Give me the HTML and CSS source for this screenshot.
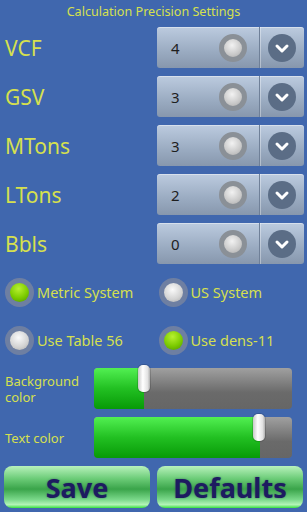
FILE: index.html
```html
<!DOCTYPE html>
<html lang="en">
<head>
  <meta charset="UTF-8">
  <meta name="viewport" content="width=device-width, initial-scale=1.0">
  <title>Calculation Precision Settings</title>
  <link rel="stylesheet" href="styles.css">
</head>
<body>
  <div class="title">Calculation Precision Settings</div>

  <div class="precision-list">
    <div class="prec-row">
      <span class="prec-label">VCF</span>
      <div class="spinner">
        <span class="spin-value">4</span>
        <span class="spin-dot"></span>
        <span class="spin-arrow">
          <svg viewBox="0 0 28 28" width="28" height="28"><circle cx="14" cy="14" r="14" fill="#5b6d86"/><path d="M9 12 L14 17 L19 12" fill="none" stroke="#fff" stroke-width="3" stroke-linecap="round" stroke-linejoin="round"/></svg>
        </span>
      </div>
    </div>
    <div class="prec-row">
      <span class="prec-label">GSV</span>
      <div class="spinner">
        <span class="spin-value">3</span>
        <span class="spin-dot"></span>
        <span class="spin-arrow">
          <svg viewBox="0 0 28 28" width="28" height="28"><circle cx="14" cy="14" r="14" fill="#5b6d86"/><path d="M9 12 L14 17 L19 12" fill="none" stroke="#fff" stroke-width="3" stroke-linecap="round" stroke-linejoin="round"/></svg>
        </span>
      </div>
    </div>
    <div class="prec-row">
      <span class="prec-label">MTons</span>
      <div class="spinner">
        <span class="spin-value">3</span>
        <span class="spin-dot"></span>
        <span class="spin-arrow">
          <svg viewBox="0 0 28 28" width="28" height="28"><circle cx="14" cy="14" r="14" fill="#5b6d86"/><path d="M9 12 L14 17 L19 12" fill="none" stroke="#fff" stroke-width="3" stroke-linecap="round" stroke-linejoin="round"/></svg>
        </span>
      </div>
    </div>
    <div class="prec-row">
      <span class="prec-label">LTons</span>
      <div class="spinner">
        <span class="spin-value">2</span>
        <span class="spin-dot"></span>
        <span class="spin-arrow">
          <svg viewBox="0 0 28 28" width="28" height="28"><circle cx="14" cy="14" r="14" fill="#5b6d86"/><path d="M9 12 L14 17 L19 12" fill="none" stroke="#fff" stroke-width="3" stroke-linecap="round" stroke-linejoin="round"/></svg>
        </span>
      </div>
    </div>
    <div class="prec-row">
      <span class="prec-label">Bbls</span>
      <div class="spinner">
        <span class="spin-value">0</span>
        <span class="spin-dot"></span>
        <span class="spin-arrow">
          <svg viewBox="0 0 28 28" width="28" height="28"><circle cx="14" cy="14" r="14" fill="#5b6d86"/><path d="M9 12 L14 17 L19 12" fill="none" stroke="#fff" stroke-width="3" stroke-linecap="round" stroke-linejoin="round"/></svg>
        </span>
      </div>
    </div>
  </div>

  <div class="radio-row first">
    <label class="radio"><span class="radio-ring"><span class="ball on"></span></span>Metric System</label>
    <label class="radio"><span class="radio-ring"><span class="ball"></span></span>US System</label>
  </div>
  <div class="radio-row">
    <label class="radio"><span class="radio-ring"><span class="ball"></span></span>Use Table 56</label>
    <label class="radio"><span class="radio-ring"><span class="ball on"></span></span>Use dens-11</label>
  </div>

  <div class="slider-row">
    <span class="slider-label">Background color</span>
    <div class="track">
      <div class="fill" style="width: 50px"></div>
      <span class="thumb" style="left: 44px"></span>
    </div>
  </div>
  <div class="slider-row second">
    <span class="slider-label">Text color</span>
    <div class="track">
      <div class="fill" style="width: 166px"></div>
      <span class="thumb" style="left: 159px"></span>
    </div>
  </div>

  <div class="buttons">
    <button class="big-btn">Save</button>
    <button class="big-btn">Defaults</button>
  </div>
</body>
</html>
```

FILE: styles.css
```css
body {
  margin: 0;
  width: 307px;
  height: 512px;
  overflow: hidden;
  background-color: #4067ae;
  font-family: 'Noto Sans', 'Open Sans', sans-serif;
  color: #d6e04e;
}
.title {
  height: 27px;
  line-height: 24px;
  text-align: center;
  font-size: 12.6px;
}
.precision-list {
  display: flex;
  flex-direction: column;
  gap: 8px;
}
.prec-row {
  display: flex;
  align-items: center;
  height: 41px;
}
.prec-label {
  flex: 1;
  padding-left: 5px;
  font-size: 21px;
}
.spinner {
  width: 147px;
  height: 41px;
  margin-right: 3px;
  display: flex;
  align-items: center;
  border-radius: 3px;
  background: linear-gradient(#bccbdf, #9aabc1 60%, #8797ad);
  box-shadow: inset 0 1px 0 rgba(255, 255, 255, 0.4);
}
.spin-value {
  width: 48px;
  padding-left: 14px;
  font-size: 15px;
  color: #1e1e1e;
}
.spin-dot {
  width: 18px;
  height: 18px;
  border-radius: 50%;
  border: 5px solid #8a9097;
  background: radial-gradient(circle at 45% 35%, #f2f2f2, #c9c9c9 60%, #a9a9a9);
  margin-right: 12px;
}
.spin-arrow {
  flex: 1;
  height: 41px;
  display: flex;
  align-items: center;
  justify-content: center;
  border-left: 1px solid #6f8098;
  box-shadow: inset 1px 0 0 rgba(255, 255, 255, 0.35);
}
.spin-arrow svg {
  display: block;
}
.radio-row {
  display: flex;
  height: 48px;
  align-items: center;
}
.radio-row.first {
  margin-top: 4px;
}
.radio {
  display: flex;
  align-items: center;
  gap: 3px;
  width: 153px;
  padding-left: 5px;
  font-size: 14.5px;
}
.radio-ring {
  width: 29px;
  height: 29px;
  border-radius: 50%;
  background: #6e7fa2;
  display: flex;
  align-items: center;
  justify-content: center;
}
.ball {
  width: 19px;
  height: 19px;
  border-radius: 50%;
  background: radial-gradient(circle at 45% 35%, #fafafa, #d2d2d2 60%, #a8a8a8);
}
.ball.on {
  background: radial-gradient(circle at 45% 30%, #b8f030, #7ccb00 55%, #4f9400);
}
.slider-row {
  display: flex;
  align-items: center;
  height: 41px;
  margin-top: 4px;
}
.slider-row.second {
  margin-top: 8px;
}
.slider-label {
  width: 89px;
  padding-left: 5px;
  font-size: 13px;
  line-height: 16px;
}
.track {
  position: relative;
  width: 198px;
  height: 41px;
  border-radius: 4px;
  background: linear-gradient(#a0a0a0, #6a6a6a 60%, #666);
}
.fill {
  height: 41px;
  border-radius: 4px 0 0 4px;
  background: linear-gradient(#52f052, #22c022 50%, #079a07);
}
.thumb {
  position: absolute;
  top: -3px;
  width: 12px;
  height: 27px;
  border-radius: 5px;
  background: linear-gradient(90deg, #c8c8c8, #ffffff 40%, #e2e2e2 80%, #b0b0b0);
  box-shadow: 0 0 0 1px rgba(0, 0, 0, 0.15);
}
.buttons {
  display: flex;
  gap: 7px;
  padding: 8px 4px 0;
}
.big-btn {
  flex: 1;
  height: 42px;
  border: none;
  border-radius: 8px;
  background: linear-gradient(#b8f2bc, #6ccc78 30%, #3aa44a 55%, #7ad88a 80%, #b4f4b8 92%, #38e040);
  font-family: 'Noto Sans', 'Open Sans', sans-serif;
  font-weight: bold;
  font-size: 27px;
  color: #1d1b60;
  text-shadow: 0 0 2px rgba(30, 30, 90, 0.5);
  padding: 0;
}
```
